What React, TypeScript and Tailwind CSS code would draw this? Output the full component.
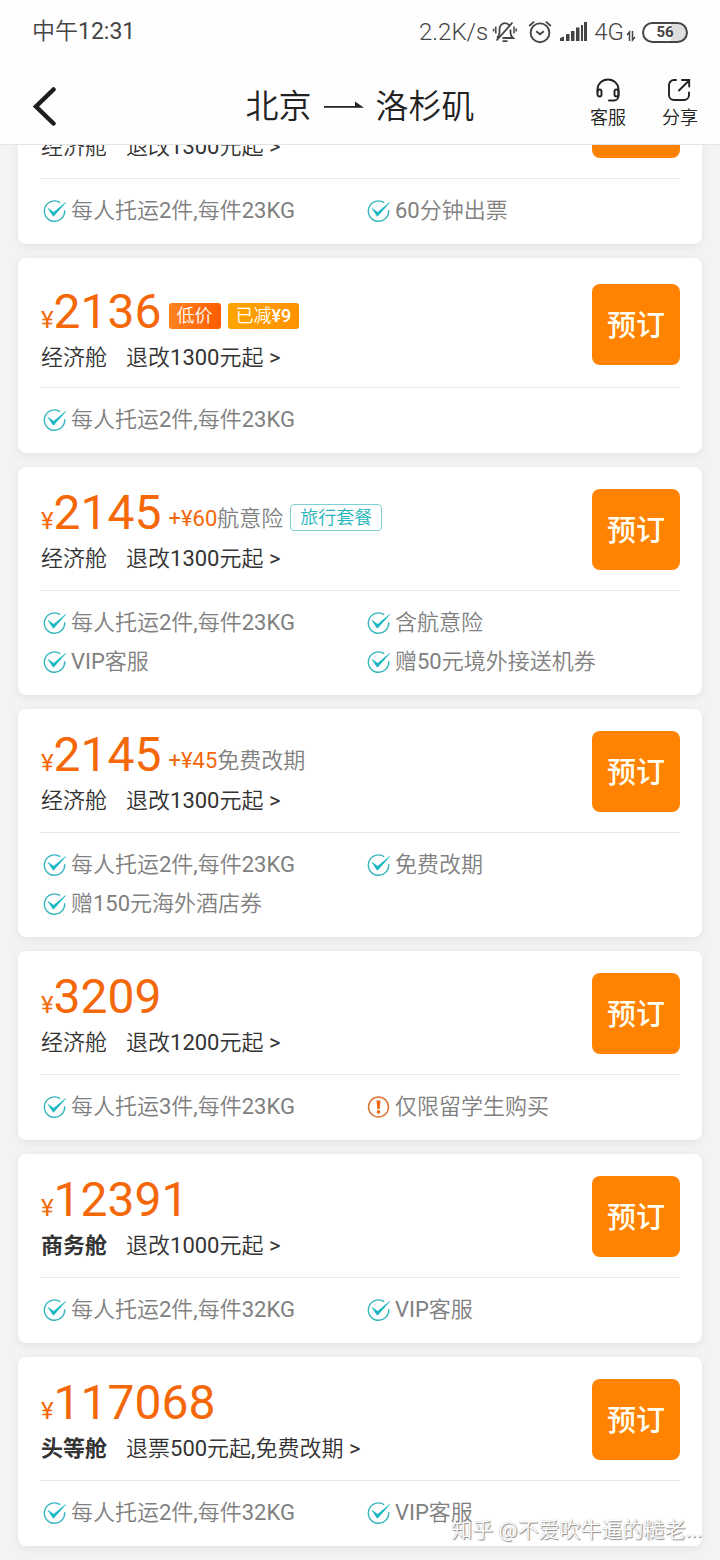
import type { ReactNode } from 'react'

interface Feature {
  text: string
  kind?: 'check' | 'notice'
}

interface Fare {
  id: string
  price?: string
  cabin: string
  premium?: boolean
  rule: string
  tags?: 'discount' | 'insurance' | 'reschedule'
  features: Feature[]
}

const FARES: Fare[] = [
  {
    id: 'f1',
    cabin: '经济舱',
    rule: '退改1300元起 >',
    features: [{ text: '每人托运2件,每件23KG' }, { text: '60分钟出票' }],
  },
  {
    id: 'f2',
    price: '2136',
    cabin: '经济舱',
    rule: '退改1300元起 >',
    tags: 'discount',
    features: [{ text: '每人托运2件,每件23KG' }],
  },
  {
    id: 'f3',
    price: '2145',
    cabin: '经济舱',
    rule: '退改1300元起 >',
    tags: 'insurance',
    features: [
      { text: '每人托运2件,每件23KG' },
      { text: '含航意险' },
      { text: 'VIP客服' },
      { text: '赠50元境外接送机券' },
    ],
  },
  {
    id: 'f4',
    price: '2145',
    cabin: '经济舱',
    rule: '退改1300元起 >',
    tags: 'reschedule',
    features: [
      { text: '每人托运2件,每件23KG' },
      { text: '免费改期' },
      { text: '赠150元海外酒店券' },
    ],
  },
  {
    id: 'f5',
    price: '3209',
    cabin: '经济舱',
    rule: '退改1200元起 >',
    features: [{ text: '每人托运3件,每件23KG' }, { text: '仅限留学生购买', kind: 'notice' }],
  },
  {
    id: 'f6',
    price: '12391',
    cabin: '商务舱',
    premium: true,
    rule: '退改1000元起 >',
    features: [{ text: '每人托运2件,每件32KG' }, { text: 'VIP客服' }],
  },
  {
    id: 'f7',
    price: '117068',
    cabin: '头等舱',
    premium: true,
    rule: '退票500元起,免费改期 >',
    features: [{ text: '每人托运2件,每件32KG' }, { text: 'VIP客服' }],
  },
]

function CheckIcon() {
  return (
    <svg className="h-6 w-6 shrink-0" viewBox="0 0 24 24" fill="none" aria-hidden="true">
      <path d="M17.200 3.600A10.200 10.200 0 1 0 21.700 11.200" stroke="#35b5bd" strokeWidth="1.400" />
      <path d="M5.200 9.500 10.400 17.300 22.600 3.500 10.700 13.400Z" fill="#12b5c0" stroke="#12b5c0" strokeWidth="0.700" />
    </svg>
  )
}

function NoticeIcon() {
  return (
    <svg className="h-6 w-6 shrink-0" viewBox="0 0 24 24" fill="none" aria-hidden="true">
      <circle cx="11.500" cy="12" r="10" stroke="#dc7434" strokeWidth="1.500" />
      <path d="M9.500 5.500h4l-.8 8.500h-2.400z" fill="#f0650f" />
      <circle cx="11.500" cy="16.900" r="1.800" fill="#f0650f" />
    </svg>
  )
}

function StatusIcons() {
  return (
    <div className="flex items-center text-[#454545]">
      {/* 静音 */}
      <svg className="ml-1 h-6 w-7" viewBox="0 0 28 24" fill="none" stroke="currentColor" strokeWidth="1.800" aria-hidden="true">
        <path d="M5 18c2-1.500 2.500-3 2.500-5V9.500C7.500 6 9.800 3.200 13 3.200c2 0 3.600 1 4.500 2.500M18.500 9.500V13c0 2 .7 3.500 2.500 5H10.500" />
        <path d="M20.500 2.500 4.500 20.500M10.500 21.200h5" />
        <path d="M3.800 6.500v7M1.600 8.500v3M22 6.500v7M24.200 8.500v3" strokeWidth="1.500" />
      </svg>
      {/* 闹钟 */}
      <svg className="ml-2 h-6 w-6" viewBox="0 0 24 24" fill="none" stroke="currentColor" strokeWidth="1.900" aria-hidden="true">
        <circle cx="12" cy="12.800" r="9.400" />
        <path d="M8.200 11.200 12 14.200l3.800-3M1.200 6 6.200 1.600M22.800 6 17.800 1.600" />
      </svg>
      {/* 信号 */}
      <svg className="ml-2 h-6 w-7" viewBox="0 0 28 24" fill="currentColor" aria-hidden="true">
        <path d="M0 18l4-1.500V21H0zM6 14h3.500v7H6zM11 11h3.500v10H11zM16 7.500h3.500V21H16zM21 5h2v16h-2zM24 2h3v19h-3z" />
      </svg>
    </div>
  )
}

function StatusBar() {
  return (
    <div className="flex h-16 items-center justify-between px-8 text-[#454545]">
      <span className="text-[23px] leading-6">中午12:31</span>
      <div className="flex items-center">
        <span className="text-[24px] leading-6 font-light">2.2K/s</span>
        <StatusIcons />
        <span className="ml-1.5 text-[24px] leading-6 font-light">4G</span>
        <svg className="mt-2 mr-1.5 ml-0.5 h-3 w-2.5" viewBox="0 0 10 12" fill="none" stroke="currentColor" strokeWidth="1.500" aria-hidden="true">
          <path d="M3.500 11V2L1 5M6.500 1v9L9 7" />
        </svg>
        <span className="flex h-[21px] w-[46px] items-center justify-center rounded-full border-2 border-[#454545] bg-linear-to-r from-white from-65% to-[#dedede] to-65% text-[15px] leading-none font-bold">
          56
        </span>
      </div>
    </div>
  )
}

function NavAction({ label, children }: { label: string; children: ReactNode }) {
  return (
    <button type="button" className="flex flex-col items-center gap-1 text-[18px] leading-6 text-[#222]">
      {children}
      {label}
    </button>
  )
}

function NavBar() {
  return (
    <div className="grid h-20 grid-cols-[1fr_auto_1fr] items-center px-[22px]">
      <button type="button" aria-label="返回" className="justify-self-start pt-1 pl-2.5">
        <svg className="h-10 w-6" viewBox="0 0 24 40" fill="none" aria-hidden="true">
          <path d="M21.500 3.500 4 20.500 21.500 37.500" stroke="#1c1c1c" strokeWidth="4.500" strokeLinecap="round" />
        </svg>
      </button>
      <h1 className="flex items-center gap-3 pt-1.5 text-[33px] leading-10 text-[#222]">
        北京
        <svg className="h-4 w-10" viewBox="0 0 40 16" aria-hidden="true">
          <path d="M0 7h31V2.500L40 8.800H0z" fill="#222" />
        </svg>
        洛杉矶
      </h1>
      <div className="flex gap-9 justify-self-end">
        <NavAction label="客服">
          <svg className="h-6 w-6" viewBox="0 0 24 24" fill="none" stroke="#222" strokeWidth="1.900" strokeLinecap="round" aria-hidden="true">
            <path d="M1.500 14.500V11.500a10.500 10 0 0 1 21 0V18a4.500 4.500 0 0 1-4.500 4.500h-5" />
            <rect x="1.500" y="11.500" width="4" height="7" rx="2" />
            <rect x="18.500" y="11.500" width="4" height="7" rx="2" />
          </svg>
        </NavAction>
        <NavAction label="分享">
          <svg className="h-6 w-6" viewBox="0 0 24 24" fill="none" stroke="#222" strokeWidth="1.900" strokeLinecap="round" aria-hidden="true">
            <path d="M8 2H6a5 5 0 0 0-5 5v10a5 5 0 0 0 5 5h10a5 5 0 0 0 5-5v-2.500" />
            <path d="M11 12.500 21 2.500M14 2h7.200V8.500" />
          </svg>
        </NavAction>
      </div>
    </div>
  )
}

function FareTags({ tags }: { tags: Fare['tags'] }) {
  if (tags === 'discount') {
    return (
      <div className="flex gap-[7px] pb-[7px] text-[18px] leading-[26px] text-white">
        <span className="rounded-[3px] bg-linear-to-r from-[#ff8220] to-[#ff5c00] px-2">低价</span>
        <span className="rounded-[3px] bg-linear-to-r from-[#ffa400] to-[#ff9200] px-2">
          已减<span className="font-medium">¥9</span>
        </span>
      </div>
    )
  }
  if (tags === 'insurance') {
    return (
      <div className="flex items-end gap-[7px] pb-1.5">
        <span className="text-[22px] leading-6 text-[#808080]">
          <span className="text-[#f5680a]">+¥60</span>航意险
        </span>
        <span className="rounded-[4px] border border-[#7fd0d5] px-[9px] text-[18px] leading-[25px] text-[#1fb3bb]">
          旅行套餐
        </span>
      </div>
    )
  }
  if (tags === 'reschedule') {
    return (
      <span className="pb-1.5 text-[22px] leading-6 text-[#808080]">
        <span className="text-[#f5680a]">+¥45</span>免费改期
      </span>
    )
  }
  return null
}

function CabinLine({ fare }: { fare: Fare }) {
  return (
    <p className="flex gap-[19px] text-[22px] leading-[22px] text-[#333]">
      <span className={fare.premium ? "font-[Roboto,'Noto_Sans_CJK_SC',sans-serif] font-bold" : ''}>
        {fare.cabin}
      </span>
      <a href="#rule">{fare.rule}</a>
    </p>
  )
}

function BookButton() {
  return (
    <button
      type="button"
      className="h-[81px] w-[88px] shrink-0 rounded-lg bg-[#ff8200] pt-1 font-[Roboto,'Noto_Sans_CJK_SC',sans-serif] text-[29px] font-medium text-[#fffdf2]"
    >
      预订
    </button>
  )
}

function FareHeader({ fare }: { fare: Fare }) {
  // 已滚出顶部的卡片，只露出底边
  if (!fare.price) {
    return (
      <div className="flex h-[33px] items-end justify-between pb-5 pl-px">
        <CabinLine fare={fare} />
        <button type="button" aria-label="预订" className="h-[13px] w-[88px] rounded-b-lg bg-[#ff8200]" />
      </div>
    )
  }
  const raised = fare.tags === 'discount'
  return (
    <div className={`flex items-center justify-between pt-[22px] pl-px ${raised ? 'pb-[18px]' : 'pb-5'}`}>
      <div className={`flex flex-col gap-[11px] ${raised ? 'pt-2' : ''}`}>
        <div className="flex h-12 items-end gap-[7px]">
          <span className="text-[48px] leading-none text-[#f5680a]">
            <span className="text-[24px]">¥</span>
            {fare.price}
          </span>
          <FareTags tags={fare.tags} />
        </div>
        <CabinLine fare={fare} />
      </div>
      <BookButton />
    </div>
  )
}

function FareCard({ fare }: { fare: Fare }) {
  return (
    <li
      className={`bg-white px-[22px] shadow-[0_2px_10px_rgba(0,0,0,0.07)] ${
        fare.price ? 'rounded-lg' : 'rounded-b-lg'
      }`}
    >
      <FareHeader fare={fare} />
      <ul className="grid grid-cols-2 gap-x-2 border-t border-[#e9e9e9] pt-3 pb-3.5">
        {fare.features.map(feature => (
          <li
            key={feature.text}
            className="flex h-[39px] items-center gap-1 pl-[3px] text-[22px] whitespace-nowrap text-[#808080]"
          >
            {feature.kind === 'notice' ? <NoticeIcon /> : <CheckIcon />}
            {feature.text}
          </li>
        ))}
      </ul>
    </li>
  )
}

export default function App() {
  return (
    <div className="relative min-h-screen bg-[#f3f3f3] font-[Roboto,'Noto_Sans_CJK_SC_DemiLight','Noto_Sans_CJK_SC_Light','Noto_Sans_CJK_SC',sans-serif]">
      <header className="relative border-b border-[#e4e4e4] bg-[#fefefe]">
        <StatusBar />
        <NavBar />
      </header>
      <main className="overflow-hidden px-[18px] pb-3.5">
        <ul className="flex flex-col gap-3.5">
          {FARES.map(fare => (
            <FareCard key={fare.id} fare={fare} />
          ))}
        </ul>
      </main>
      <span className="absolute right-[18px] bottom-4 text-[21px] leading-7 text-white [text-shadow:1px_1px_1px_#888,0_0_1px_#aaa]">
        知乎 @不爱吹牛逼的糙老...
      </span>
    </div>
  )
}
